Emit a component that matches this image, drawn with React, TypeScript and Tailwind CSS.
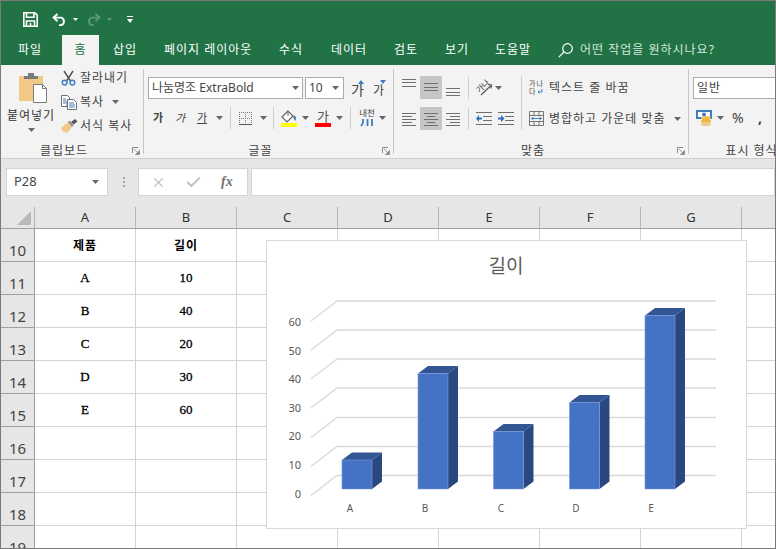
import React from "react";
import { Check, X } from "lucide-react";

const tabs = [
  { label: "삽입", cls: "ml-[14px] w-[25px]" },
  { label: "페이지 레이아웃", cls: "ml-[26px] w-[89px]" },
  { label: "수식", cls: "ml-[26px] w-[25px]" },
  { label: "데이터", cls: "ml-[27px] w-[36px]" },
  { label: "검토", cls: "ml-[27px] w-[25px]" },
  { label: "보기", cls: "ml-[26px] w-[25px]" },
  { label: "도움말", cls: "ml-[25px] w-[37px]" },
];

const cols = ["A", "B", "C", "D", "E", "F", "G"];
const cells: [string, string][] = [
  ["제품", "길이"],
  ["A", "10"],
  ["B", "40"],
  ["C", "20"],
  ["D", "30"],
  ["E", "60"],
  ["", ""],
  ["", ""],
  ["", ""],
  ["", ""],
];

const gridY = [301, 330, 359, 388, 417.5, 446.5, 475.5];
const yLabels = [
  { t: "60", y: 326 },
  { t: "50", y: 355 },
  { t: "40", y: 383 },
  { t: "30", y: 412 },
  { t: "20", y: 440 },
  { t: "10", y: 469 },
  { t: "0", y: 498 },
];
const bars = [
  { x: 342, top: 460, label: "A", lx: 350 },
  { x: 418, top: 373.5, label: "B", lx: 425 },
  { x: 493.5, top: 431.5, label: "C", lx: 501 },
  { x: 569.5, top: 402.5, label: "D", lx: 576 },
  { x: 645, top: 315.5, label: "E", lx: 651 },
];

function Caret({ className = "" }: { className?: string }) {
  return (
    <svg width="7" height="4" viewBox="0 0 7 4" className={className}>
      <path d="M0 0h7L3.5 4z" fill="#666666" />
    </svg>
  );
}

function CaretSlot({ w }: { w: string }) {
  return (
    <span className={`flex items-center justify-center ${w}`}>
      <Caret />
    </span>
  );
}

function Launcher() {
  return (
    <svg width="8" height="8" viewBox="0 0 8 8" className="mr-[3px]">
      <path d="M.5 6V.5H6" fill="none" stroke="#8a8a8a" />
      <path d="M2 2l4 4M7.5 3.5v4h-4z" fill="#8a8a8a" stroke="#8a8a8a" strokeWidth=".8" />
    </svg>
  );
}

function GroupFooter({ label, cls = "" }: { label: string; cls?: string }) {
  return (
    <div className={`mt-auto flex h-[14px] items-center pt-[7px] ${cls}`}>
      <span className="flex-1 text-center text-xs leading-none tracking-[1px] text-[#444444]">{label}</span>
      <span className="flex w-4 justify-end">
        <Launcher />
      </span>
    </div>
  );
}

function Lines({ rows }: { rows: [number, number, number][] }) {
  return (
    <svg width="16" height="23" viewBox="0 0 16 23" stroke="#6f6f6f" strokeWidth="1">
      {rows.map(([x1, x2, y]) => (
        <path key={`${x1}-${y}`} d={`M${x1} ${y}.5H${x2}`} />
      ))}
    </svg>
  );
}

function AlignBtn({ rows, active }: { rows: [number, number, number][]; active?: boolean }) {
  return (
    <span className={`flex h-[23px] w-[22px] items-center justify-center ${active ? "bg-[#c6c6c6]" : ""}`}>
      <Lines rows={rows} />
    </span>
  );
}

function Sep({ cls }: { cls: string }) {
  return <span className={`h-[22px] w-px bg-[#cfcfcf] ${cls}`} />;
}

function SaveIcon() {
  return (
    <svg width="15" height="15" viewBox="0 0 15 15" fill="none" stroke="#ffffff" strokeWidth="1.6">
      <path d="M.8.8h11l2.4 2.4v11H.8z" />
      <path d="M3.5 1v4.2h7.5V1M3.5 14V9h8v5" />
      <path d="M7.5 11v3" />
    </svg>
  );
}

function UndoIcon({ color, flip }: { color: string; flip?: boolean }) {
  return (
    <svg width="15" height="13" viewBox="0 0 15 13" fill="none" stroke={color} strokeWidth="1.9" className={flip ? "-scale-x-100" : ""}>
      <path d="M5.5 1 1.6 4.6l3.9 3.6" />
      <path d="M2 4.6h7.2a4 4 0 0 1 0 7.6H7" />
    </svg>
  );
}

function PasteIcon() {
  return (
    <svg width="30" height="32" viewBox="0 0 30 32">
      <path d="M1 4h24v25H1z" fill="#f0c987" />
      <path d="M6 4h14v3H6zM10 1h6v3h-6z" fill="#7b7b7b" />
      <path d="M15.5 12.5h9l4 4v14h-13z" fill="#ffffff" stroke="#7b7b7b" />
      <path d="M24.5 12.5v4h4" fill="none" stroke="#7b7b7b" />
    </svg>
  );
}

function ScissorsIcon() {
  return (
    <svg width="15" height="16" viewBox="0 0 15 16" fill="none">
      <path d="M3 1l6.5 10M12 1 5.5 11" stroke="#555555" strokeWidth="1.5" />
      <circle cx="3.6" cy="12.6" r="2.4" stroke="#3f7cc0" strokeWidth="1.4" />
      <circle cx="11.4" cy="12.6" r="2.4" stroke="#3f7cc0" strokeWidth="1.4" />
    </svg>
  );
}

function CopyIcon() {
  return (
    <svg width="16" height="15" viewBox="0 0 16 15" fill="none">
      <path d="M.5.5h6l2 2v3H6v6H.5z" fill="#ffffff" stroke="#6f6f6f" />
      <path d="M6.5 4.5h6l3 3v7h-9z" fill="#ffffff" stroke="#6f6f6f" />
      <path d="M8 8h5M8 10h6M8 12h6M2 4h3M2 6h3M2 8h3" stroke="#3f7cc0" />
    </svg>
  );
}

function BrushIcon() {
  return (
    <svg width="17" height="15" viewBox="0 0 17 15">
      <path d="M0 9 7 3l4 5-5 6-2.500-1-1 .5z" fill="#f0c987" />
      <path d="M7 3l4 5 1.500-1.500-4-5z" fill="#8a8a8a" />
      <path d="M10 3l4-3 2.500 2.500-4 3z" fill="#555555" />
    </svg>
  );
}

function BorderIcon() {
  return (
    <svg width="13" height="13" viewBox="0 0 13 13" stroke="#777777" strokeDasharray="1 1" fill="none">
      <path d="M.5 0v13M6.500 0v13M12.500 0v13M0 .5h13M0 6.500h13" />
      <path d="M0 12.500h13" strokeDasharray="none" stroke="#555555" />
    </svg>
  );
}

function FillIcon() {
  return (
    <svg width="16" height="17" viewBox="0 0 16 17" fill="none">
      <path d="M7 1 1 7l5 5 6-6z" stroke="#666666" strokeWidth="1.2" fill="#ffffff" />
      <path d="M7 1v5" stroke="#666666" />
      <path d="M12 6c2-1 3.500 1 3 3l-1 2-1-2z" fill="#3f7cc0" />
      <path d="M0 13h16v4H0z" fill="#ffff00" />
    </svg>
  );
}

function ColorIcon() {
  return (
    <span className="relative flex h-[17px] w-4 flex-col items-center">
      <span className="text-[13px] leading-[13px] text-[#555555]">가</span>
      <span className="mt-auto h-1 w-4 bg-[#ff0000]" />
    </span>
  );
}

function FuriganaIcon() {
  return (
    <svg width="16" height="20" viewBox="0 0 16 20">
      <text x="8" y="8" textAnchor="middle" fontSize="8.500" fill="#444444">내천</text>
      <path d="M4 11v3c0 2-1 3-2 4M8.500 11v7M13 11v7" stroke="#3f7cc0" strokeWidth="1.800" fill="none" />
    </svg>
  );
}

function OrientIcon() {
  return (
    <svg width="17" height="17" viewBox="0 0 17 17" fill="none" className="overflow-visible">
      <text x="0" y="10" fontSize="8" fill="#333333" transform="rotate(-42 7 8)">가나</text>
      <path d="M5 16 15 6.500M12 5.500l3.500.5-.5 3.500" stroke="#555555" strokeWidth="1.200" />
    </svg>
  );
}

function IndentIcon({ flip }: { flip?: boolean }) {
  return (
    <svg width="16" height="14" viewBox="0 0 16 14" fill="none">
      <path d="M0 .5h16M7 4.500h9M7 8.500h9M0 12.500h16" stroke="#6f6f6f" />
      {flip ? (
        <path d="M0 5.500h3V3l3.500 3.500L3 10V7.500H0z" fill="#2f6fb5" />
      ) : (
        <path d="M6 5.500H3V3L0 6.500 3 10V7.500h3z" fill="#2f6fb5" />
      )}
    </svg>
  );
}

function WrapIcon() {
  return (
    <svg width="16" height="17" viewBox="0 0 16 17">
      <text x="0" y="7" fontSize="7" fill="#444444">가나</text>
      <text x="0" y="15" fontSize="7" fill="#444444">다</text>
      <path d="M13 10v3H9M10.500 11.500 9 13l1.500 1.500" fill="none" stroke="#3f7cc0" />
    </svg>
  );
}

function MergeIcon() {
  return (
    <svg width="15" height="15" viewBox="0 0 15 15" fill="none">
      <path d="M.5.5h14v14H.5zM.5 4.500h14M.5 10.500h14M5 .5v4M10 .5v4M5 10.500v4M10 10.500v4" stroke="#777777" />
      <path d="M2.500 7.500h10M2.500 7.500l2-1.500M2.500 7.500l2 1.500M12.500 7.500l-2-1.500M12.500 7.500l-2 1.500" stroke="#3f7cc0" />
    </svg>
  );
}

function MoneyIcon() {
  return (
    <svg width="17" height="16" viewBox="0 0 17 16">
      <path d="M0 0h16v9H0z" fill="#3f7cc0" />
      <path d="M2 2h12v5H2z" fill="#ffffff" />
      <circle cx="8" cy="4.500" r="2" fill="#3f7cc0" />
      <ellipse cx="10" cy="8" rx="5" ry="2" fill="#f0c050" />
      <ellipse cx="10" cy="11" rx="5" ry="2" fill="#e8b840" />
      <ellipse cx="10" cy="14" rx="5" ry="2" fill="#f0c987" />
    </svg>
  );
}

function Ribbon() {
  return (
    <div className="flex h-[93px] overflow-hidden bg-[#f3f3f3] pt-1 text-[#444444]">
      <div className="flex h-[85px] w-[143px] shrink-0 flex-col border-r border-[#c6c6c6]">
        <div className="flex">
          <div className="ml-[5px] flex w-[50px] flex-col items-center">
            <span className="ml-[3px] mt-[3px] h-[34px]">
              <PasteIcon />
            </span>
            <span className="mt-[2px] whitespace-nowrap text-xs leading-[16px] tracking-[1px] text-[#333333]">붙여넣기</span>
            <Caret className="mt-[4px]" />
          </div>
          <div className="ml-[5px] flex flex-col gap-[6px] text-xs tracking-[1px]">
            <div className="flex h-[18px] items-center">
              <span className="w-[19px]"><ScissorsIcon /></span>
              잘라내기
            </div>
            <div className="flex h-[18px] items-center">
              <span className="w-[19px]"><CopyIcon /></span>
              복사
              <Caret className="ml-[8px]" />
            </div>
            <div className="flex h-[18px] items-center">
              <span className="w-[19px]"><BrushIcon /></span>
              서식 복사
            </div>
          </div>
        </div>
        <GroupFooter label="클립보드" />
      </div>

      <div className="flex h-[85px] w-[250px] shrink-0 flex-col border-r border-[#c6c6c6] pl-[4px]">
        <div className="mt-2 flex h-[22px] items-center">
          <div className="flex h-full w-[155px] items-center justify-between border border-[#ababab] bg-white pl-[3px] pr-[3px] text-xs">
            나눔명조 ExtraBold
            <Caret />
          </div>
          <div className="ml-[2px] flex h-full w-[39px] items-center justify-between border border-[#ababab] bg-white pl-[3px] pr-[4px] text-xs">
            10
            <Caret />
          </div>
          <span className="relative ml-[7px] mt-[4px] w-[13px] text-[14px] leading-none">
            가
            <svg width="6" height="4" viewBox="0 0 6 4" className="absolute -top-[3px] right-0">
              <path d="M3 0l3 4H0z" fill="#3f7cc0" />
            </svg>
          </span>
          <span className="relative ml-[9px] mt-[5px] w-[12px] text-[12px] leading-none">
            가
            <svg width="6" height="4" viewBox="0 0 6 4" className="absolute -top-[5px] -right-px">
              <path d="M0 0h6L3 4z" fill="#3f7cc0" />
            </svg>
          </span>
        </div>
        <div className="-ml-px mt-2 flex h-[22px] items-center">
          <span className="flex w-[22px] justify-center text-[11px] font-bold">가</span>
          <span className="flex w-[22px] justify-center text-[11px] italic">가</span>
          <span className="flex w-[22px] justify-center text-[11px] underline">가</span>
          <CaretSlot w="w-[12px]" />
          <Sep cls="ml-[5px]" />
          <span className="ml-[8px] flex w-[13px]"><BorderIcon /></span>
          <span className="ml-[5px] flex w-[12px] justify-center"><Caret /></span>
          <Sep cls="ml-[4px]" />
          <span className="ml-[7px] flex w-4"><FillIcon /></span>
          <CaretSlot w="w-4" />
          <span className="ml-[2px] flex w-4"><ColorIcon /></span>
          <CaretSlot w="w-4" />
          <Sep cls="ml-[3px]" />
          <span className="ml-[8px] flex w-4"><FuriganaIcon /></span>
          <CaretSlot w="w-[14px]" />
        </div>
        <GroupFooter label="글꼴" cls="-ml-[4px]" />
      </div>

      <div className="flex h-[85px] w-[295px] shrink-0 flex-col border-r border-[#c6c6c6]">
        <div className="mt-[7px] flex">
          <div className="flex w-[127px] flex-col gap-2 pl-1">
            <div className="flex h-[23px] items-center">
              <AlignBtn rows={[[1, 15, 3], [1, 15, 6], [1, 15, 10]]} />
              <AlignBtn active rows={[[1, 15, 7], [1, 15, 11], [1, 15, 14]]} />
              <AlignBtn rows={[[1, 15, 12], [1, 15, 16], [1, 15, 19]]} />
              <Sep cls="ml-1" />
              <span className="ml-[7px] flex w-4"><OrientIcon /></span>
              <CaretSlot w="w-3" />
            </div>
            <div className="flex h-[23px] items-center">
              <AlignBtn rows={[[1, 15, 6], [1, 11, 9], [1, 15, 12], [1, 11, 15], [1, 15, 18]]} />
              <AlignBtn active rows={[[1, 15, 6], [4, 12, 9], [1, 15, 12], [4, 12, 15], [1, 15, 18]]} />
              <AlignBtn rows={[[1, 15, 6], [5, 15, 9], [1, 15, 12], [5, 15, 15], [1, 15, 18]]} />
              <Sep cls="ml-1" />
              <span className="ml-[7px] flex w-4"><IndentIcon /></span>
              <span className="ml-[6px] flex w-4"><IndentIcon flip /></span>
            </div>
          </div>
          <div className="flex h-[54px] flex-col gap-2 border-l border-[#cfcfcf] pl-[7px] text-xs tracking-[1px]">
            <div className="flex h-[23px] items-center">
              <span className="flex w-[20px]"><WrapIcon /></span>
              텍스트 줄 바꿈
            </div>
            <div className="flex h-[23px] items-center">
              <span className="flex w-[20px]"><MergeIcon /></span>
              병합하고 가운데 맞춤
              <Caret className="ml-[8px]" />
            </div>
          </div>
        </div>
        <GroupFooter label="맞춤" />
      </div>

      <div className="flex h-[85px] w-[125px] shrink-0 flex-col pl-[4px]">
        <div className="mt-2 flex h-[22px] w-[100px] items-center border border-[#ababab] bg-white pl-[3px] text-xs tracking-[1px]">일반</div>
        <div className="mt-2 flex h-[22px] items-center pl-[3px]">
          <span className="flex w-[17px]"><MoneyIcon /></span>
          <CaretSlot w="w-[14px]" />
          <span className="ml-[5px] w-[13px] text-sm leading-none">%</span>
          <span className="ml-[13px] text-sm font-bold leading-none">,</span>
        </div>
        <div className="-ml-[4px] mt-auto flex h-[14px] items-center justify-center whitespace-nowrap pt-[7px] text-xs leading-none tracking-[1px]">표시 형식</div>
      </div>
    </div>
  );
}

function FormulaBar() {
  return (
    <div className="flex h-[49px] items-start border-t border-[#cfcfcf] bg-[#e6e6e6] pt-[9px]">
      <div className="ml-[5px] flex h-[28px] w-[102px] items-center justify-between border border-[#d4d4d4] bg-white pl-[7px] pr-2 text-[13px] text-[#444444]">
        P28
        <Caret />
      </div>
      <div className="ml-[14px] flex h-[28px] w-[3px] flex-col items-center justify-center gap-[2px]">
        <span className="h-[2px] w-[2px] bg-[#a6a6a6]" />
        <span className="h-[2px] w-[2px] bg-[#a6a6a6]" />
        <span className="h-[2px] w-[2px] bg-[#a6a6a6]" />
      </div>
      <div className="ml-[13px] flex h-[28px] w-[110px] items-center border border-[#d4d4d4] bg-white">
        <X size={15} strokeWidth={2} className="ml-[12px] text-[#c4c4c4]" />
        <Check size={17} strokeWidth={3} className="ml-[19px] text-[#c4c4c4]" />
        <span className="ml-[19px] font-['Liberation_Serif',serif] text-[14px] font-bold italic leading-none text-[#707070]">fx</span>
      </div>
      <div className="ml-[3px] h-[28px] flex-1 border border-[#d4d4d4] bg-white" />
    </div>
  );
}

function Sheet() {
  return (
    <div className="flex-1 overflow-hidden bg-white">
      <div className="grid h-[22px] grid-cols-[34px_repeat(7,101px)_33px] border-b border-[#9f9f9f] bg-[#e6e6e6] text-[13px] text-[#333333]">
        <div className="flex items-center justify-end border-r border-[#b5b5b5] pr-[3px]">
          <svg width="14" height="14" viewBox="0 0 14 14">
            <path d="M14 0v14H0z" fill="#b8b8b8" />
          </svg>
        </div>
        {cols.map((c) => (
          <div key={c} className="flex items-center justify-center border-r border-[#b5b5b5]">{c}</div>
        ))}
        <div />
      </div>
      <div className="grid grid-cols-[34px_repeat(7,101px)_33px] auto-rows-[33px]">
        {cells.map((row, i) => (
          <React.Fragment key={i}>
            <div className="flex items-end justify-center border-b border-r border-[#9f9f9f] bg-[#e6e6e6] pb-[1px] text-[15px] leading-[20px] text-[#444444]">
              {i + 10}
            </div>
            {row.map((v, j) => (
              <div
                key={j}
                className={`flex items-center justify-center border-b border-r border-[#d4d4d4] text-black ${i === 0 ? "pt-[1px] text-xs font-bold tracking-[1px]" : "font-['Liberation_Serif','Noto_Sans_CJK_KR',serif] text-[13px] [-webkit-text-stroke:0.3px_#000000]"}`}
              >
                {v}
              </div>
            ))}
            {[0, 1, 2, 3, 4, 5].map((k) => (
              <div key={k} className={`border-b border-[#d4d4d4] ${k < 5 ? "border-r" : ""}`} />
            ))}
          </React.Fragment>
        ))}
      </div>
    </div>
  );
}

function Chart() {
  return (
    <div className="absolute left-[265px] top-[239px] h-[289px] w-[481px] border border-[#d9d9d9] bg-white">
      <svg width="479" height="287" viewBox="267 241 479 287" fontFamily="'Noto Sans', sans-serif">
        <text x="506" y="273" textAnchor="middle" fontSize="19" fill="#595959" fontFamily="'Noto Sans CJK KR', sans-serif">길이</text>
        {gridY.map((y) => (
          <path key={y} d={`M311 ${y + 20}L337 ${y}H716`} fill="none" stroke="#d9d9d9" strokeWidth="1.3" />
        ))}
        {yLabels.map((l) => (
          <text key={l.t} x="301" y={l.y} textAnchor="end" fontSize="11" fill="#595959">{l.t}</text>
        ))}
        {bars.map((b) => (
          <g key={b.label}>
            <path d={`M${b.x + 30} ${b.top}l10 -7.500V481.500L${b.x + 30} 489z`} fill="#2a4880" />
            <path d={`M${b.x} ${b.top}l10 -7.500h30l-10 7.500z`} fill="#325594" />
            <rect x={b.x} y={b.top} width="30" height={489 - b.top} fill="#4472c4" stroke="#7c9ad6" strokeWidth=".6" />
            <text x={b.lx} y="512" textAnchor="middle" fontSize="10" fill="#595959">{b.label}</text>
          </g>
        ))}
      </svg>
    </div>
  );
}

export default function App() {
  return (
    <div className="relative box-border flex h-[549px] w-[776px] flex-col overflow-hidden border border-[#7a7a7a] bg-white font-['Noto_Sans','Noto_Sans_CJK_KR',sans-serif]">
      <div className="flex h-[34px] shrink-0 items-center bg-[#217346] pt-[2px]">
        <span className="ml-[22px] flex"><SaveIcon /></span>
        <span className="ml-[14px] flex"><UndoIcon color="#ffffff" /></span>
        <svg width="5" height="3" viewBox="0 0 5 3" className="ml-[6px]"><path d="M0 0h5L2.500 3z" fill="#ffffff" /></svg>
        <span className="ml-[8px] flex"><UndoIcon color="#5c9878" flip /></span>
        <svg width="5" height="3" viewBox="0 0 5 3" className="ml-[6px]"><path d="M0 0h5L2.500 3z" fill="#5c9878" /></svg>
        <svg width="6" height="7" viewBox="0 0 6 7" className="ml-[15px]"><path d="M0 0h6v1H0zM0 3h6L3 7z" fill="#ffffff" /></svg>
      </div>

      <div className="flex h-[30px] shrink-0 items-center bg-[#217346] text-xs tracking-[1px] text-white">
        <span className="ml-[17px] w-[25px] whitespace-nowrap">파일</span>
        <span className="ml-[19px] flex h-full w-[37px] items-center justify-center bg-[#f3f3f3] text-[#217346]">홈</span>
        {tabs.map((t) => (
          <span key={t.label} className={`${t.cls} whitespace-nowrap`}>{t.label}</span>
        ))}
        <svg width="15" height="15" viewBox="0 0 15 15" fill="none" stroke="#ffffff" strokeWidth="1.200" className="ml-[26px]">
          <circle cx="9.500" cy="5.500" r="4.800" />
          <path d="M6 9 .8 14.200" />
        </svg>
        <span className="ml-[7px] whitespace-nowrap text-[#d5e5dc]">어떤 작업을 원하시나요?</span>
      </div>

      <Ribbon />
      <FormulaBar />
      <Sheet />
      <Chart />
    </div>
  );
}
